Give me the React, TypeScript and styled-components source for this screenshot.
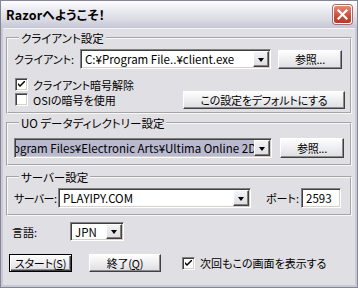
import React from 'react';
import styled, { createGlobalStyle } from 'styled-components';

const GlobalStyle = createGlobalStyle`
  html, body {
    margin: 0;
    padding: 0;
    background: #ffffff;
  }
  body {
    font-family: "Noto Sans CJK JP", "Liberation Sans", sans-serif;
    font-size: 11px;
    line-height: 14px;
    font-feature-settings: "palt" 1;
    color: #000;
  }
`;

const Window = styled.div`
  width: 358px;
  height: 288px;
  box-sizing: border-box;
  border: 1px solid #85859a;
  background: #c9c9d6;
  display: flex;
  flex-direction: column;
`;

const TitleBar = styled.div`
  height: 27px;
  flex: 0 0 27px;
  display: flex;
  align-items: center;
  justify-content: space-between;
  padding: 0 5px 0 5px;
  background: linear-gradient(#ffffff 0%, #ececf2 30%, #dadae4 70%, #c6c6d4 100%);
`;

const Title = styled.div`
  font-weight: bold;
  font-size: 12.5px;
  letter-spacing: 0.2px;
`;

const CloseButton = styled.div`
  width: 19px;
  height: 19px;
  box-sizing: border-box;
  border: 1px solid #fff;
  border-radius: 3px;
  background: linear-gradient(#e28c7c, #cc4a3a 60%, #b83a2e);
  display: flex;
  align-items: center;
  justify-content: center;
  box-shadow: 0 0 0 1px #a07070;
`;

const Body = styled.div`
  flex: 1;
  margin: 0 2px 2px 2px;
  background: #e0dfe3;
  border-top: 1px solid #f4f4f8;
  padding: 2px 3px 0 3px;
  display: flex;
  flex-direction: column;
`;

const Group = styled.fieldset<{ $top: number; $pt: number; $pb: number }>`
  margin: ${p => p.$top}px 0 0 0;
  padding: ${p => p.$pt}px 5px ${p => p.$pb}px 6px;
  border: 2px groove #f8f8f8;
  min-width: 0;
`;

const Legend = styled.legend`
  padding: 0 2px;
  margin-left: 5px;
  line-height: 14px;
  font-size: 11.5px;
`;

const Row = styled.div<{ $gap?: number }>`
  display: flex;
  align-items: center;
  gap: ${p => p.$gap ?? 0}px;
`;

const Label = styled.span<{ $w: number; $tight?: boolean }>`
  width: ${p => p.$w}px;
  flex: 0 0 ${p => p.$w}px;
  white-space: nowrap;
  letter-spacing: ${p => (p.$tight ? '-0.6px' : 'normal')};
`;

const Field = styled.div<{ $w: number; $h?: number }>`
  width: ${p => p.$w}px;
  height: ${p => p.$h ?? 20}px;
  flex: 0 0 ${p => p.$w}px;
  box-sizing: border-box;
  border-style: solid;
  border-width: 1px;
  border-color: #808080 #ffffff #ffffff #808080;
  box-shadow: inset 1px 1px 0 #404040, inset -1px -1px 0 #d4d0c8;
  background: #fff;
  display: flex;
  align-items: stretch;
  overflow: hidden;
`;

const FieldText = styled.div<{ $sel?: boolean; $shift?: number }>`
  flex: 1;
  min-width: 0;
  overflow: hidden;
  white-space: nowrap;
  padding-left: ${p => (p.$shift ? 0 : 3)}px;
  margin: 1px 0 1px 1px;
  line-height: 16px;
  font-size: 11.5px;
  background: ${p => (p.$sel ? '#b9b9cf' : 'transparent')};
  span {
    display: inline-block;
    margin-left: ${p => p.$shift ?? 0}px;
  }
`;

const DropButton = styled.div`
  width: 16px;
  flex: 0 0 16px;
  margin: 1px 1px 1px 0;
  box-sizing: border-box;
  border-style: solid;
  border-width: 1px;
  border-color: #ffffff #404040 #404040 #ffffff;
  box-shadow: inset -1px -1px 0 #808080;
  background: linear-gradient(#f4f4f6, #dcdce2);
  display: flex;
  align-items: center;
  justify-content: center;
  &::after {
    content: '';
    border-left: 3.5px solid transparent;
    border-right: 3.5px solid transparent;
    border-top: 4px solid #000;
    margin-top: 1px;
  }
`;

const Button = styled.div<{ $w: number; $h?: number; $default?: boolean }>`
  width: ${p => p.$w}px;
  height: ${p => p.$h ?? 19}px;
  flex: 0 0 ${p => p.$w}px;
  box-sizing: border-box;
  border-style: solid;
  border-width: 1px;
  border-color: ${p => (p.$default ? '#000' : '#ffffff #404040 #404040 #ffffff')};
  box-shadow: ${p =>
    p.$default
      ? 'inset 1px 1px 0 #fff, inset -1px -1px 0 #404040, inset -2px -2px 0 #909090'
      : 'inset -1px -1px 0 #8c8c8c'};
  background: linear-gradient(#fdfdfd, #ebebee 60%, #dedee3);
  display: flex;
  align-items: center;
  justify-content: center;
  white-space: nowrap;
  letter-spacing: -0.2px;
`;

const CheckRow = styled.label`
  display: flex;
  align-items: center;
  gap: 5px;
  height: 15px;
  white-space: nowrap;
`;

const Box = styled.span`
  width: 13px;
  height: 13px;
  flex: 0 0 13px;
  box-sizing: border-box;
  border-style: solid;
  border-width: 1px;
  border-color: #808080 #ffffff #ffffff #808080;
  box-shadow: inset 1px 1px 0 #404040, inset -1px -1px 0 #d4d0c8;
  background: #fff;
  display: flex;
  align-items: center;
  justify-content: center;
`;

const ChecksArea = styled.div`
  display: flex;
  justify-content: space-between;
  align-items: flex-end;
  margin-top: 8px;
`;

const CheckColumn = styled.div`
  display: flex;
  flex-direction: column;
  margin: 0 0 2px 1px;
`;

const LangRow = styled(Row)`
  margin: 6px 0 0 6px;
`;

const BottomRow = styled(Row)`
  margin: 13px 0 0 3px;
`;

const Mnemonic = styled.span`
  text-decoration: underline;
`;

const Check: React.FC<{ on: boolean; text: string }> = ({ on, text }) => (
  <CheckRow>
    <Box>
      {on && (
        <svg width="7" height="7" viewBox="0 0 7 7">
          <path d="M0 2 L0 4 L2 6 L7 1 L7 -1 L2 4 Z" fill="#000" />
        </svg>
      )}
    </Box>
    {text}
  </CheckRow>
);

const Combo: React.FC<{ w: number; h?: number; sel?: boolean; shift?: number; children: React.ReactNode }> = ({
  w,
  h,
  sel,
  shift,
  children,
}) => (
  <Field $w={w} $h={h}>
    <FieldText $sel={sel} $shift={shift}>
      <span>{children}</span>
    </FieldText>
    <DropButton />
  </Field>
);

export default function App() {
  return (
    <>
      <GlobalStyle />
      <Window>
        <TitleBar>
          <Title>Razorへようこそ！</Title>
          <CloseButton>
            <svg width="11" height="11" viewBox="0 0 11 11">
              <path d="M1.5 1.5 L9.5 9.5 M9.5 1.5 L1.5 9.5" stroke="#fff" strokeWidth="2.2" strokeLinecap="square" />
            </svg>
          </CloseButton>
        </TitleBar>
        <Body>
          <Group $top={0} $pt={4} $pb={3}>
            <Legend>クライアント設定</Legend>
            <Row>
              <Label $w={66}>クライアント:</Label>
              <Combo w={191}>C:¥Program File..¥client.exe</Combo>
              <Button $w={64} style={{ marginLeft: 7 }}>参照...</Button>
            </Row>
            <ChecksArea>
              <CheckColumn>
                <Check on text="クライアント暗号解除" />
                <Check on={false} text="OSIの暗号を使用" />
              </CheckColumn>
              <Button $w={162} $h={18}>この設定をデフォルトにする</Button>
            </ChecksArea>
          </Group>

          <Group $top={2} $pt={8} $pb={6}>
            <Legend>UO データディレクトリー設定</Legend>
            <Row $gap={8}>
              <Combo w={258} sel shift={-3}>
                ogram Files¥Electronic Arts¥Ultima Online 2D
              </Combo>
              <Button $w={64} $h={20}>参照...</Button>
            </Row>
          </Group>

          <Group $top={4} $pt={4} $pb={6}>
            <Legend>サーバー設定</Legend>
            <Row>
              <Label $w={44} $tight>サーバー:</Label>
              <Combo w={193}>PLAYIPY.COM</Combo>
              <Label $w={35} style={{ marginLeft: 15 }}>ポート:</Label>
              <Field $w={40}>
                <FieldText>2593</FieldText>
              </Field>
            </Row>
          </Group>

          <LangRow>
            <Label $w={58}>言語:</Label>
            <Combo w={54} h={19}>JPN</Combo>
          </LangRow>

          <BottomRow $gap={17}>
            <Button $w={63} $h={18} $default>
              スタート(<Mnemonic>S</Mnemonic>)
            </Button>
            <Button $w={72} $h={18}>
              終了(<Mnemonic>Q</Mnemonic>)
            </Button>
            <div style={{ marginLeft: 4 }}>
              <Check on text="次回もこの画面を表示する" />
            </div>
          </BottomRow>
        </Body>
      </Window>
    </>
  );
}
